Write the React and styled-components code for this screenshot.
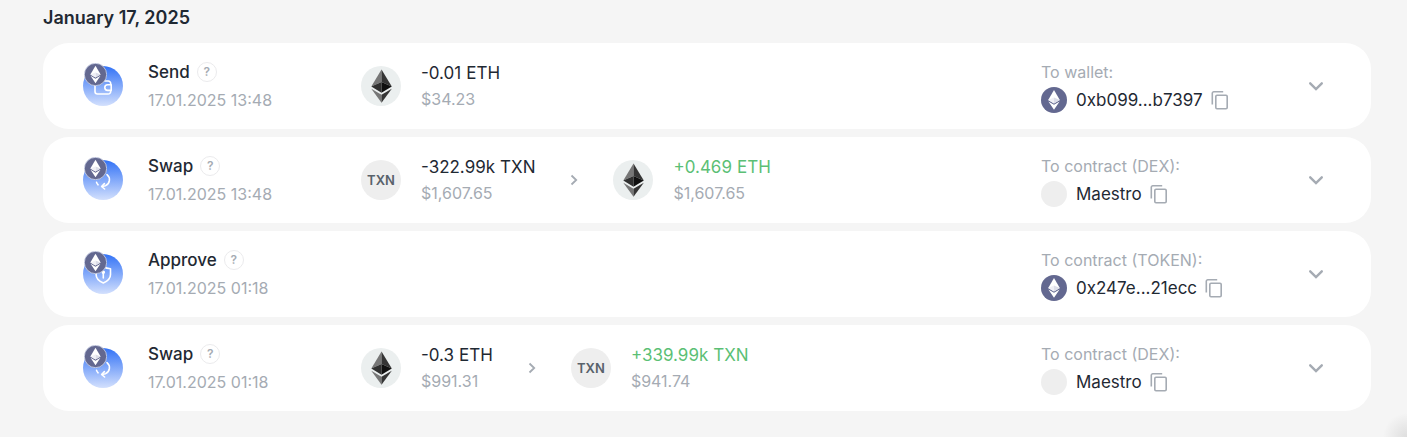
import React from "react";
import styled, { createGlobalStyle } from "styled-components";

const GlobalStyle = createGlobalStyle`
  *, *::before, *::after { box-sizing: border-box; }
  body {
    margin: 0;
    background: #f5f5f5;
    color: #1f2933;
    font-family: Inter, "Liberation Sans", sans-serif;
  }
`;

const Page = styled.main`
  min-height: 100vh;
  padding: 6px 36px 24px 43px;
  background: radial-gradient(circle at bottom right, #dedede, #f5f5f5 24px);
`;

const DayTitle = styled.h2`
  margin: 0 0 13px;
  font-size: 18px;
  line-height: 24px;
  font-weight: 600;
`;

const List = styled.ul`
  display: flex;
  flex-direction: column;
  gap: 8px;
  margin: 0;
  padding: 0;
  list-style: none;
`;

const Card = styled.li`
  display: grid;
  grid-template-columns: 278px 1fr 263px 24px;
  align-items: center;
  min-height: 86px;
  padding: 0 43px 0 40px;
  border-radius: 26px;
  background: #ffffff;
`;

const Operation = styled.div`
  display: flex;
  align-items: center;
  gap: 25px;
`;

const OperationIcon = styled.div`
  position: relative;
  width: 40px;
  height: 40px;
  border-radius: 50%;
  background: linear-gradient(180deg, #3272f6 0%, #d3e0fd 100%);

  > svg { display: block; }
`;

const NetworkBadge = styled.span`
  position: absolute;
  top: -3px;
  left: 1px;
  width: 23px;
  height: 23px;

  svg { display: block; }
`;

const TitleRow = styled.div`
  display: flex;
  align-items: center;
  gap: 7px;
  font-size: 17px;
  line-height: 28px;
  font-weight: 500;
`;

const HelpButton = styled.button`
  width: 20px;
  height: 20px;
  padding: 0;
  border: 1px solid #ebebed;
  border-radius: 50%;
  background: none;
  color: #a5abb3;
  font: 600 12px/18px Inter, "Liberation Sans", sans-serif;
  cursor: pointer;
`;

const Muted = styled.div`
  color: #a5abb3;
  font-size: 16px;
  line-height: ${(p) => p.$line || 28}px;
`;

const Assets = styled.div`
  display: flex;
  align-items: center;
`;

const Asset = styled.div`
  display: flex;
  align-items: center;
  gap: 20px;
`;

const Token = styled.div`
  display: flex;
  align-items: center;
  justify-content: center;
  width: 40px;
  height: 40px;
  border-radius: 50%;
  background: ${(p) => (p.$tint ? "#ebefef" : "#eeeeee")};
  color: #59626b;
  font-size: 13px;
  font-weight: 600;
`;

const Amount = styled.div`
  display: flex;
  gap: 5px;
  color: ${(p) => (p.$gain ? "#5bbf75" : "#1f2933")};
  font-size: 17px;
  line-height: 26px;
`;

const ArrowIcon = styled.svg`
  width: 16px;
  height: 16px;
  margin: 0 31px;
`;

const RecipientRow = styled.div`
  display: flex;
  align-items: center;
  font-size: 17px;
  line-height: 28px;
`;

const Avatar = styled.span`
  width: 26px;
  height: 26px;
  margin-right: 9px;
  border-radius: 50%;
  background: #eeeeee;

  svg { display: block; }
`;

const IconButton = styled.button`
  display: flex;
  align-items: center;
  justify-content: center;
  width: ${(p) => p.$size}px;
  height: ${(p) => p.$size}px;
  margin-left: ${(p) => p.$space || 0}px;
  padding: 0;
  border: 0;
  background: none;
  color: #a5abb3;
  cursor: pointer;
`;

function EthCoin({ size, ring }) {
  return (
    <svg width={size} height={size} viewBox="0 0 26 26" aria-hidden="true">
      <circle cx="13" cy="13" r={ring ? 12.6 : 13} fill="#636890" stroke={ring ? "#dfe6f7" : "none"} strokeWidth="0.8" />
      <path d="M13 3 7.2 13.1 13 16.4l5.8-3.3Z" fill="#fff" />
      <path d="M13 17.7 7.4 14.5 13 22.8l5.6-8.3Z" fill="#fff" />
      <path d="M13 10.6v5.8l5.8-3.3Z" fill="#dcdde8" />
      <path d="m7.2 13.1 5.8-2.5v5.8Z" fill="#efeff5" />
    </svg>
  );
}

function EthMark() {
  return (
    <svg width="40" height="40" viewBox="0 0 40 40" aria-hidden="true">
      <path d="M20.5 3.5 10.3 20.6l10.2-4.7Z" fill="#777" />
      <path d="m20.5 3.5 10.3 17.1-10.3-4.7Z" fill="#353535" />
      <path d="m10.3 20.6 10.2-4.7v10.8Z" fill="#303030" />
      <path d="m30.8 20.6-10.3-4.7v10.8Z" fill="#101010" />
      <path d="m10.3 22.7 10.2 6v8.1Z" fill="#777" />
      <path d="m30.8 22.7-10.3 6v8.1Z" fill="#353535" />
    </svg>
  );
}

const glyphs = {
  Send: (
    <>
      <path d="M12 16v9.5a2.5 2.5 0 0 0 2.5 2.5h10.7a2.5 2.5 0 0 0 2.5-2.5v-1" />
      <path d="M20 15h5.2a2.5 2.5 0 0 1 2.5 2.5v1" />
      <path d="M28.2 18.8h-3.6a2.7 2.7 0 0 0 0 5.6h3.6Z" />
    </>
  ),
  Swap: (
    <>
      <path d="M24 14.6a6.6 6.6 0 0 1-1.6 11.2l-3.2.7" />
      <path d="m21.4 23.6-2.8 2.9 3 2.5" />
      <path d="M13.5 22.2c.2 1 .8 1.9 1.6 2.6" />
    </>
  ),
  Approve: (
    <>
      <path d="M20.3 12.5c2.2 1.5 4.6 2.2 7.2 2.2v5.8c0 4-2.5 6.5-7.2 8.4-4.7-1.9-7.2-4.4-7.2-8.4v-3" />
      <path d="M20.3 24v-5.8" />
      <circle cx="20.3" cy="18.2" r="1" />
    </>
  ),
};

function OperationBadge({ type }) {
  return (
    <OperationIcon>
      <svg width="40" height="40" viewBox="0 0 40 40" fill="none" stroke="#fff" strokeWidth="1.6" strokeLinecap="round" strokeLinejoin="round" aria-hidden="true">
        {glyphs[type]}
      </svg>
      <NetworkBadge>
        <EthCoin size={23} ring />
      </NetworkBadge>
    </OperationIcon>
  );
}

function AssetItem({ amount, symbol, value }) {
  const isEth = symbol === "ETH";
  return (
    <Asset>
      <Token $tint={isEth}>{isEth ? <EthMark /> : symbol}</Token>
      <div>
        <Amount $gain={amount.startsWith("+")}>
          <span>{amount}</span>
          <span>{symbol}</span>
        </Amount>
        <Muted $line={26}>{value}</Muted>
      </div>
    </Asset>
  );
}

const transactions = [
  {
    type: "Send",
    date: "17.01.2025 13:48",
    assets: [{ amount: "-0.01", symbol: "ETH", value: "$34.23" }],
    label: "To wallet:",
    recipient: "0xb099...b7397",
    coin: true,
  },
  {
    type: "Swap",
    date: "17.01.2025 13:48",
    assets: [
      { amount: "-322.99k", symbol: "TXN", value: "$1,607.65" },
      { amount: "+0.469", symbol: "ETH", value: "$1,607.65" },
    ],
    label: "To contract (DEX):",
    recipient: "Maestro",
  },
  {
    type: "Approve",
    date: "17.01.2025 01:18",
    assets: [],
    label: "To contract (TOKEN):",
    recipient: "0x247e...21ecc",
    coin: true,
  },
  {
    type: "Swap",
    date: "17.01.2025 01:18",
    assets: [
      { amount: "-0.3", symbol: "ETH", value: "$991.31" },
      { amount: "+339.99k", symbol: "TXN", value: "$941.74" },
    ],
    label: "To contract (DEX):",
    recipient: "Maestro",
  },
];

function Transaction({ type, date, assets, label, recipient, coin }) {
  return (
    <Card>
      <Operation>
        <OperationBadge type={type} />
        <div>
          <TitleRow>
            {type}
            <HelpButton type="button" aria-label={`About ${type}`}>?</HelpButton>
          </TitleRow>
          <Muted>{date}</Muted>
        </div>
      </Operation>
      <Assets>
        {assets.map((asset, i) => (
          <React.Fragment key={asset.symbol}>
            {i > 0 && (
              <ArrowIcon viewBox="0 0 16 16" fill="none" stroke="#a5abb3" strokeWidth="1.8" aria-hidden="true">
                <path d="m5.5 3.5 4.7 4.5-4.7 4.5" />
              </ArrowIcon>
            )}
            <AssetItem {...asset} />
          </React.Fragment>
        ))}
      </Assets>
      <div>
        <Muted>{label}</Muted>
        <RecipientRow>
          <Avatar>{coin && <EthCoin size={26} />}</Avatar>
          {recipient}
          <IconButton type="button" $size={20} $space={7} aria-label="Copy">
            <svg width="20" height="20" viewBox="0 0 20 20" fill="none" stroke="currentColor" strokeWidth="1.6" aria-hidden="true">
              <path d="M2.3 14.5V3.3a1.5 1.5 0 0 1 1.5-1.5h9.4" />
              <rect x="5.8" y="5.3" width="11.4" height="13.4" rx="1.2" />
            </svg>
          </IconButton>
        </RecipientRow>
      </div>
      <IconButton type="button" $size={24} aria-label="Show details">
        <svg width="24" height="24" viewBox="0 0 24 24" fill="none" stroke="currentColor" strokeWidth="2.4" strokeLinecap="round" aria-hidden="true">
          <path d="m6.2 9.3 5.8 5.8 5.8-5.8" />
        </svg>
      </IconButton>
    </Card>
  );
}

export default function App() {
  return (
    <>
      <GlobalStyle />
      <Page>
        <DayTitle>January 17, 2025</DayTitle>
        <List>
          {transactions.map((tx, i) => (
            <Transaction key={i} {...tx} />
          ))}
        </List>
      </Page>
    </>
  );
}
